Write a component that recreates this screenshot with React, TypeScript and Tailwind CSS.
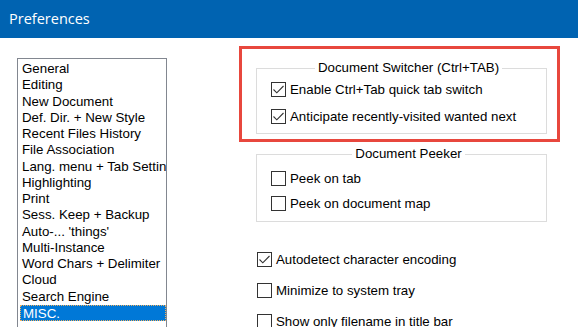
import type { ReactNode } from 'react'

const pages = [
  'General',
  'Editing',
  'New Document',
  'Def. Dir. + New Style',
  'Recent Files History',
  'File Association',
  'Lang. menu + Tab Settings',
  'Highlighting',
  'Print',
  'Sess. Keep + Backup',
  "Auto-... 'things'",
  'Multi-Instance',
  'Word Chars + Delimiter',
  'Cloud',
  'Search Engine',
  'MISC.',
]

function CheckBox({ checked }: { checked?: boolean }) {
  return (
    <span className="w-[15px] h-[15px] border border-[#333333] bg-white flex items-center justify-center shrink-0">
      {checked && (
        <svg width="13" height="13" viewBox="0 0 13 13">
          <path d="M1.5 6.5 L4.8 9.8 L11.5 3" stroke="#333333" strokeWidth="1.1" fill="none" />
        </svg>
      )}
    </span>
  )
}

function Option({ label, checked, rowClass }: { label: string; checked?: boolean; rowClass: string }) {
  return (
    <div className={`flex items-center gap-[4px] ${rowClass}`}>
      <CheckBox checked={checked} />
      <span className="whitespace-nowrap">{label}</span>
    </div>
  )
}

function Group({ title, children, className }: { title: string; children: ReactNode; className: string }) {
  return (
    <fieldset className={`border border-[#dcdcdc] w-[291px] pl-[14px] ${className}`}>
      <legend className="mx-auto px-[3px] leading-[16px]">{title}</legend>
      {children}
    </fieldset>
  )
}

export default function App() {
  return (
    <div className="w-[578px] h-[327px] overflow-hidden bg-white text-black font-['Liberation_Sans',Arial,sans-serif] text-[13.3px]">
      {/* Title bar */}
      <div className="h-[38px] bg-[#0063b1] pl-[9px] flex items-center text-white text-[14.5px] font-['Open_Sans',sans-serif] pb-[1px]">
        Preferences
      </div>

      <div className="flex">
        {/* Page list */}
        <div className="ml-[17px] mt-[20px] w-[150px] h-[300px] shrink-0 border border-[#828790] pt-[2px] pl-[2px] overflow-hidden">
          {pages.map((p) => {
            const selected = p === 'MISC.'
            return (
              <div
                key={p}
                className={`h-[16.27px] leading-[16px] pl-[2px] whitespace-nowrap overflow-hidden ${
                  selected ? 'bg-[#0078d7] text-white border border-dotted border-[#f0b060] pl-[1px] leading-[14px]' : ''
                }`}
              >
                {p}
              </div>
            )
          })}
        </div>

        {/* Options */}
        <div className="ml-[72px] mt-[8px] flex flex-col">
          <div className="w-[321px] border-[3px] border-[#e8473d] pl-[14px] pt-[11px] pb-[5px]">
            <Group title="Document Switcher (Ctrl+TAB)" className="pb-[3px]">
              <Option checked label="Enable Ctrl+Tab quick tab switch" rowClass="h-[27px]" />
              <Option checked label="Anticipate recently-visited wanted next" rowClass="h-[27px]" />
            </Group>
          </div>

          <Group title="Document Peeker" className="ml-[17px] mt-[4px] pt-[4px] pb-[5px]">
            <Option label="Peek on tab" rowClass="h-[25px]" />
            <Option label="Peek on document map" rowClass="h-[25px]" />
          </Group>

          <div className="ml-[18px] mt-[22px]">
            <Option checked label="Autodetect character encoding" rowClass="h-[31px]" />
            <Option label="Minimize to system tray" rowClass="h-[31px]" />
            <Option label="Show only filename in title bar" rowClass="h-[31px]" />
          </div>
        </div>
      </div>
    </div>
  )
}
